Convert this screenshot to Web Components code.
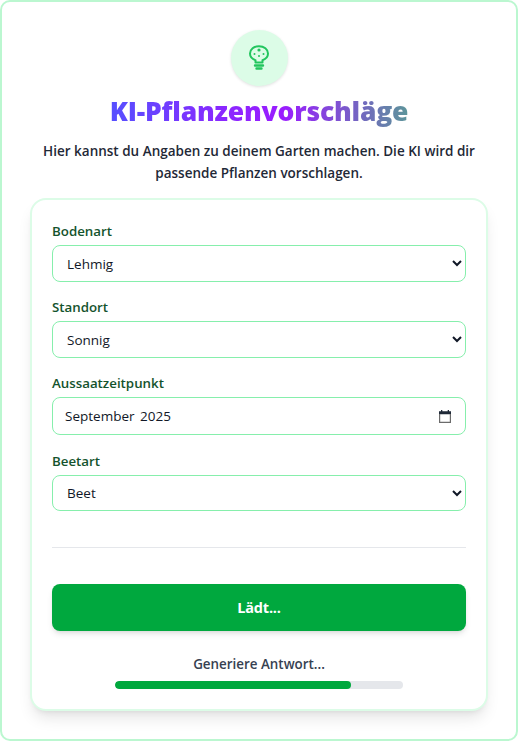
<!doctype html>
<html lang="de"><head><meta charset="utf-8"><title>KI-Pflanzenvorschläge</title>
<style>
html,body{margin:0;padding:0;background:#fff}
body{font-family:"Open Sans","Noto Sans",sans-serif;color:#1f2937}
</style></head><body>
<plant-page>
  <plant-hero slot="hero" heading="KI-Pflanzenvorschläge">Hier kannst du Angaben zu deinem Garten machen. Die KI wird dir passende Pflanzen vorschlagen.</plant-hero>
  <plant-card slot="card">
    <plant-field label="Bodenart" options="Lehmig"></plant-field>
    <plant-field label="Standort" options="Sonnig"></plant-field>
    <plant-field label="Aussaatzeitpunkt" month="September 2025"></plant-field>
    <plant-field label="Beetart" options="Beet" short></plant-field>
    <plant-progress label="Generiere Antwort..." button="Lädt..." value="82"></plant-progress>
  </plant-card>
</plant-page>
<script>
function define(name, html, init){
  customElements.define(name, class extends HTMLElement{
    connectedCallback(){
      if(this.shadowRoot) return;
      const r=this.attachShadow({mode:'open'});
      r.innerHTML=html;
      if(init) init(r,this);
    }
  });
}
define('plant-page',`<style>
:host{display:block;width:518px;height:744px;box-sizing:border-box}
.o{box-sizing:border-box;height:741px;border:2px solid #bbf7d0;border-radius:10px;background:#fff;padding:28px 28px 0;display:flex;flex-direction:column;gap:14px}
</style><div class="o"><slot name="hero"></slot><slot name="card"></slot></div>`);
define('plant-hero',`<style>
:host{display:flex;flex-direction:column;align-items:center}
.c{width:57px;height:56px;border-radius:50%;background:#dcfce7;box-shadow:0 1px 3px rgba(0,0,0,.12);display:flex;align-items:center;justify-content:center}
h1{margin:8px 0 0;font:800 26.5px/34px "Open Sans",sans-serif;letter-spacing:-.2px;background:linear-gradient(90deg,#5650ff 0%,#8a28ff 38%,#9a1cff 58%,#5c959a 100%);-webkit-background-clip:text;background-clip:text;color:transparent}
p{margin:12px 0 0;font:600 13.5px/22px "Open Sans",sans-serif;color:#1f2937;text-align:center;width:450px}
</style><div class="c"><svg width="24" height="26" viewBox="0 0 24 26" fill="none" stroke="#22c55e" stroke-width="2" stroke-linecap="round" stroke-linejoin="round">
<path d="M8.5 17.5v-2.2C5.3 14.2 3 11.4 3 8.6 3 4.4 7 1.2 12 1.2s9 3.2 9 7.4c0 2.8-2.3 5.6-5.5 6.7v2.2z"/>
<path d="M8 20.5h8M9.5 23.5h5" stroke-width="2.4"/>
<circle cx="12" cy="5" r="1.6" fill="#22c55e" stroke="none"/><circle cx="7.5" cy="9" r="1" fill="#22c55e" stroke="none"/><circle cx="16.5" cy="9" r="1" fill="#22c55e" stroke="none"/><circle cx="12" cy="11" r="1" fill="#22c55e" stroke="none"/>
</svg></div><h1></h1><p><slot></slot></p>`,(r,h)=>{r.querySelector('h1').textContent=h.getAttribute('heading')});
define('plant-card',`<style>
:host{display:block}
.k{box-sizing:border-box;height:513px;border:2px solid #dcfce7;border-radius:16px;background:#fff;box-shadow:0 10px 15px -3px rgba(0,0,0,.1),0 4px 6px -4px rgba(0,0,0,.1);padding:21px 20px 0;display:flex;flex-direction:column}
</style><div class="k"><slot></slot></div>`);
define('plant-field',`<style>
:host{display:block;margin-bottom:15px}
:host([month]){margin-bottom:16px}
label{display:block;font:600 13.3px/20px "Open Sans",sans-serif;color:#14532d;margin-bottom:4px}
select{display:block;box-sizing:border-box;width:100%;height:37px;border:1px solid #86efac;border-radius:8px;background:#fff;color:#111827;font:400 13.5px "Open Sans",sans-serif;outline:0;padding:0 10px}
:host([short]) select{height:36px}
.m{box-sizing:border-box;width:100%;height:38px;border:1px solid #86efac;border-radius:8px;background:#fff;color:#111827;font:400 13.5px "Open Sans",sans-serif;padding:0 14px 0 12px;display:flex;align-items:center;justify-content:space-between;word-spacing:2px}
</style><label></label>`,(r,h)=>{
  r.querySelector('label').textContent=h.getAttribute('label');
  let el;
  if(h.hasAttribute('month')){
    el=document.createElement('div');el.className='m';
    el.innerHTML='<span></span><svg width="12" height="13" viewBox="0 0 12 13"><path fill="#1f2937" d="M2 0h1.3v1.2h5.4V0H10v1.2h2v3.1H0V1.2h2z"/><path fill="none" stroke="#6b6b6b" stroke-width="1.2" d="M.6 4v8.4h10.8V4"/></svg>';
    el.firstChild.textContent=h.getAttribute('month');
  } else {
    el=document.createElement('select');h.getAttribute('options').split(',').forEach(o=>{const x=document.createElement('option');x.textContent=o;el.append(x)});
  }
  r.append(el);
});
define('plant-progress',`<style>
:host{display:block}
hr{border:0;border-top:1px solid #e5e7eb;margin:21px 0 36px}
button{display:block;width:100%;height:47px;border:0;border-radius:8px;background:#00a83e;color:#fff;font:700 14.5px "Open Sans",sans-serif;letter-spacing:-.2px;box-shadow:0 4px 6px -1px rgba(0,0,0,.1),0 2px 4px -2px rgba(0,0,0,.1)}
.l{margin-top:23px;text-align:center;font:600 13.4px/20px "Open Sans",sans-serif;color:#374151}
.t{width:288px;height:8px;margin:7px auto 0;border-radius:4px;background:#e5e7eb;overflow:hidden}
.f{height:100%;border-radius:4px;background:#00a83e}
</style><hr><button type="button"></button><div class="l"></div><div class="t"><div class="f"></div></div>`,(r,h)=>{
  r.querySelector('button').textContent=h.getAttribute('button');
  r.querySelector('.l').textContent=h.getAttribute('label');
  r.querySelector('.f').style.width=h.getAttribute('value')+'%';
});
</script>
</body></html>
